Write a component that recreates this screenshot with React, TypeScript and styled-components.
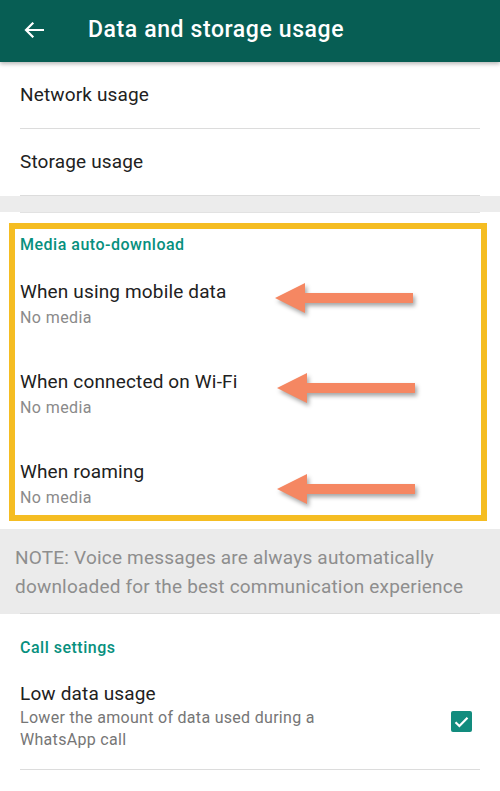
import React from "react";
import styled, { createGlobalStyle } from "styled-components";

const Global = createGlobalStyle`
  html, body { margin: 0; padding: 0; background: #ffffff; }
  body { font-family: Roboto, "Noto Sans", Arial, sans-serif; -webkit-font-smoothing: antialiased; }
  * { box-sizing: border-box; }
`;

const Page = styled.div`
  width: 500px;
  min-height: 791px;
  background: #ffffff;
  display: flex;
  flex-direction: column;
  overflow: hidden;
`;

const Header = styled.header`
  height: 62px;
  background: #075e54;
  display: flex;
  align-items: center;
  box-shadow: 0 2px 4px rgba(0, 0, 0, 0.28);
  position: relative;
  z-index: 2;
`;

const BackButton = styled.div`
  width: 88px;
  height: 62px;
  display: flex;
  align-items: center;
  padding-left: 24px;
  padding-bottom: 3px;
`;

const Title = styled.h1`
  margin: 0;
  color: #ffffff;
  font-size: 23px;
  font-weight: 500;
  letter-spacing: 0.6px;
  padding-bottom: 3px;
`;

const NavRow = styled.div`
  height: 67px;
  margin: 0 20px;
  display: flex;
  align-items: center;
  border-bottom: 1px solid #dcdcdc;
  font-size: 19px;
  letter-spacing: 0.15px;
  color: #212121;
  padding-bottom: 2px;
`;

const Band = styled.div`
  height: 17px;
  background: #ececec;
  border-bottom: 1px solid #ffffff;
  position: relative;
  &::after {
    content: "";
    position: absolute;
    left: 20px;
    right: 20px;
    bottom: -1px;
    height: 1px;
    background: #e2e2e2;
  }
`;

const Highlight = styled.section`
  margin: 10px 13px 0 9px;
  border: 6px solid #f5bd22;
  padding: 0 0 0 5px;
  position: relative;
  display: flex;
  flex-direction: column;
`;

const SectionHeading = styled.div<{ $pad: string }>`
  color: #07907e;
  font-size: 16px;
  font-weight: 500;
  letter-spacing: 0.5px;
  line-height: 20px;
  padding: ${(p) => p.$pad};
`;

const Option = styled.div`
  display: flex;
  flex-direction: column;
  padding: 18px 0 7px;
  & + & {
    margin-top: 17px;
  }
`;

const OptionTitle = styled.div`
  font-size: 19px;
  letter-spacing: 0.15px;
  line-height: 24px;
  color: #212121;
`;

const OptionSub = styled.div`
  font-size: 16px;
  letter-spacing: 0.4px;
  line-height: 20px;
  color: #8a8a8a;
  margin-top: 4px;
`;

const Arrow = styled.svg<{ $top: number; $left: number }>`
  position: absolute;
  top: ${(p) => p.$top}px;
  left: ${(p) => p.$left}px;
  width: 140px;
  height: 32px;
  overflow: visible;
  filter: drop-shadow(2px 3px 2px rgba(0, 0, 0, 0.35));
`;

const Note = styled.div`
  margin-top: 8px;
  background: #ebebeb;
  padding: 14px 15px 13px;
  font-size: 19px;
  letter-spacing: 0.2px;
  line-height: 29px;
  color: #8e8e8e;
  position: relative;
  &::after {
    content: "";
    position: absolute;
    left: 20px;
    right: 20px;
    bottom: 0;
    height: 1px;
    background: #dadada;
  }
`;

const CallSection = styled.section`
  margin: 0 20px;
  display: flex;
  flex-direction: column;
`;

const ToggleRow = styled.div`
  display: flex;
  align-items: center;
  justify-content: space-between;
  padding: 24px 8px 18px 0;
  border-bottom: 1px solid #dcdcdc;
`;

const ToggleText = styled.div`
  display: flex;
  flex-direction: column;
  max-width: 330px;
`;

const ToggleSub = styled.div`
  font-size: 16px;
  letter-spacing: 0.3px;
  line-height: 22px;
  color: #767676;
  margin-top: 1px;
`;

const Check = styled.div`
  width: 21px;
  height: 21px;
  border-radius: 2px;
  background: #128c7e;
  display: flex;
  align-items: center;
  justify-content: center;
  margin-top: 10px;
`;

const ArrowShape = ({ top, left }: { top: number; left: number }) => (
  <Arrow $top={top} $left={left} viewBox="0 0 140 32">
    <polygon
      points="0,15 30,0 30,10 138,10 138,20 30,20 30,30"
      fill="#f58762"
    />
  </Arrow>
);

export default function App() {
  return (
    <Page>
      <Global />
      <Header>
        <BackButton>
          <svg width="20" height="16" viewBox="0 0 20 16">
            <path
              d="M19 8H2.5 M8.5 1.5 L2 8 L8.5 14.5"
              stroke="#ffffff"
              strokeWidth="2.2"
              fill="none"
              strokeLinecap="square"
            />
          </svg>
        </BackButton>
        <Title>Data and storage usage</Title>
      </Header>
      <NavRow>Network usage</NavRow>
      <NavRow>Storage usage</NavRow>
      <Band />
      <Highlight>
        <SectionHeading $pad="6px 0 7px">Media auto-download</SectionHeading>
        <Option>
          <OptionTitle>When using mobile data</OptionTitle>
          <OptionSub>No media</OptionSub>
        </Option>
        <Option>
          <OptionTitle>When connected on Wi-Fi</OptionTitle>
          <OptionSub>No media</OptionSub>
        </Option>
        <Option>
          <OptionTitle>When roaming</OptionTitle>
          <OptionSub>No media</OptionSub>
        </Option>
        <ArrowShape top={54} left={260} />
        <ArrowShape top={144} left={262} />
        <ArrowShape top={245} left={262} />
      </Highlight>
      <Note>
        NOTE: Voice messages are always automatically downloaded for the best
        communication experience
      </Note>
      <CallSection>
        <SectionHeading $pad="24px 0 0">Call settings</SectionHeading>
        <ToggleRow>
          <ToggleText>
            <OptionTitle>Low data usage</OptionTitle>
            <ToggleSub>Lower the amount of data used during a WhatsApp call</ToggleSub>
          </ToggleText>
          <Check>
            <svg width="15" height="12" viewBox="0 0 15 12">
              <path
                d="M1.5 6.2 L5.4 10 L13.5 1.8"
                stroke="#ffffff"
                strokeWidth="2.2"
                fill="none"
              />
            </svg>
          </Check>
        </ToggleRow>
      </CallSection>
    </Page>
  );
}
